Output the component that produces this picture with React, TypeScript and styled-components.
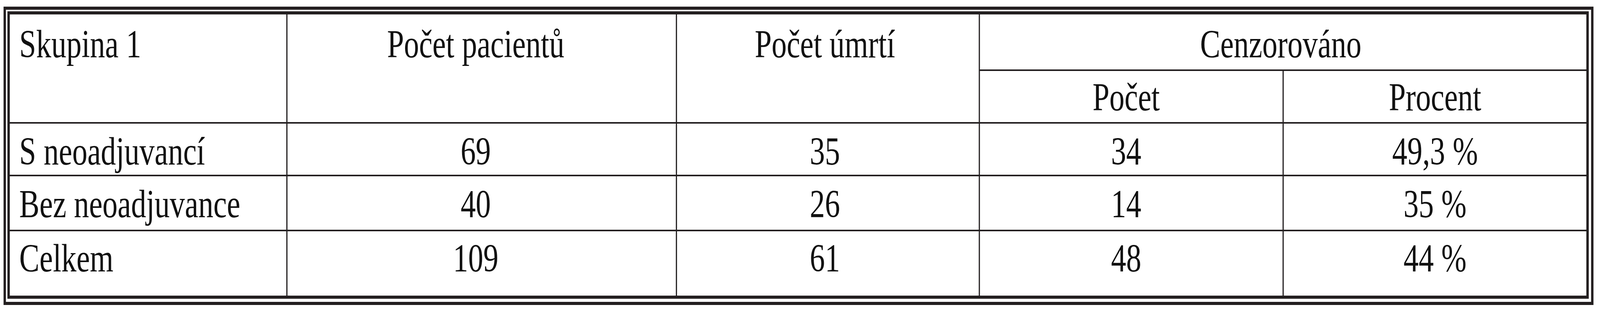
import React, { useLayoutEffect, useState } from "react";
import styled, { createGlobalStyle } from "styled-components";

// the table is drawn on a 5393px wide sheet and squeezed to the real window width
const SHEET_WIDTH = 5393;

type Row = {
  label: string;
  patients: string;
  deaths: string;
  censored: string;
  percent: string;
  padTop: number;
};

const rows: Row[] = [
  { label: "S neoadjuvancí", patients: "69", deaths: "35", censored: "34", percent: "49,3 %", padTop: 20 },
  { label: "Bez neoadjuvance", patients: "40", deaths: "26", censored: "14", percent: "35 %", padTop: 20 },
  { label: "Celkem", patients: "109", deaths: "61", censored: "48", percent: "44 %", padTop: 18 },
];

const App: React.FC = () => {
  const [scale, setScale] = useState(1);

  useLayoutEffect(() => {
    const update = () => setScale(Math.min(1, window.innerWidth / SHEET_WIDTH));
    update();
    window.addEventListener("resize", update);
    return () => window.removeEventListener("resize", update);
  }, []);

  return (
    <>
      <GlobalStyle />
      <Viewport>
        <Sheet style={{ transform: `scaleX(${scale})` }}>
          <Frame>
            <Grid>
              <Cell $span={[1, 2]} $align="left" $padTop={25}>
                Skupina 1
              </Cell>
              <Cell $span={[1, 2]} $padTop={25} $nudge={40}>
                Počet pacientů
              </Cell>
              <Cell $span={[1, 2]} $padTop={25} $nudge={20}>
                Počet úmrtí
              </Cell>
              <Cell $cols={2} $padTop={25} $nudge={16}>
                Cenzorováno
              </Cell>
              <Cell $padTop={16} $nudge={34}>
                Počet
              </Cell>
              <Cell $padTop={16}>Procent</Cell>

              {rows.map((row) => (
                <React.Fragment key={row.label}>
                  <Cell $align="left" $padTop={row.padTop}>
                    {row.label}
                  </Cell>
                  <Cell $padTop={row.padTop} $nudge={40}>
                    {row.patients}
                  </Cell>
                  <Cell $padTop={row.padTop} $nudge={20}>
                    {row.deaths}
                  </Cell>
                  <Cell $padTop={row.padTop} $nudge={34}>
                    {row.censored}
                  </Cell>
                  <Cell $padTop={row.padTop}>{row.percent}</Cell>
                </React.Fragment>
              ))}
            </Grid>
          </Frame>
        </Sheet>
      </Viewport>
    </>
  );
};

const GlobalStyle = createGlobalStyle`
  body {
    margin: 0;
    background: #ffffff;
  }
`;

const Viewport = styled.div`
  width: 100vw;
  height: 800px;
  overflow: hidden;
`;

const Sheet = styled.div`
  width: ${SHEET_WIDTH}px;
  padding: 17px 0 0 12px;
  box-sizing: border-box;
  transform-origin: 0 0;
`;

const Frame = styled.div`
  width: max-content;
  border: 8px solid #231f20;
  padding: 4px 8px 8px 5px;
  background: #ffffff;
`;

const Grid = styled.div`
  display: grid;
  grid-template-columns: 932px 1309px 1017px 1020px 1020px;
  grid-template-rows: 141px 131px 131px 137px 165px;
  gap: 4px;
  border: 8px solid #231f20;
  background: #231f20;
`;

const Cell = styled.div<{
  $align?: "left" | "center";
  $padTop: number;
  $nudge?: number;
  $cols?: number;
  $span?: [number, number];
}>`
  background: #ffffff;
  color: #111111;
  font-family: "Liberation Serif", "Times New Roman", serif;
  font-size: 102px;
  line-height: 102px;
  white-space: nowrap;
  text-align: ${(p) => p.$align || "center"};
  padding: ${(p) => p.$padTop}px ${(p) => p.$nudge || 0}px 0
    ${(p) => (p.$align === "left" ? 32 : 0)}px;
  grid-column: ${(p) => (p.$cols ? `span ${p.$cols}` : "auto")};
  grid-row: ${(p) => (p.$span ? `${p.$span[0]} / span ${p.$span[1]}` : "auto")};
`;

export default App;
